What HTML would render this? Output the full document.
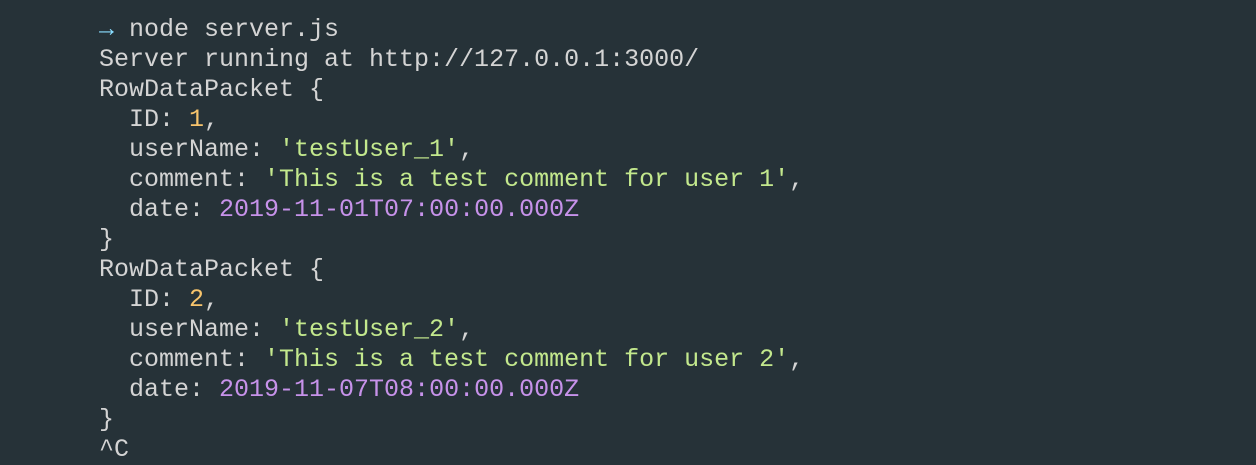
<!DOCTYPE html>
<html><head><meta charset="utf-8"><style>
html,body{margin:0;padding:0;width:1256px;height:440px;overflow:hidden;background:#263238;}
pre{margin:0;position:absolute;left:99px;top:15px;font-family:"Liberation Mono",monospace;font-size:25px;line-height:30px;color:#d4d4d4;}
.a{color:#89ddff;font-weight:bold}.n{color:#f7c46c}.s{color:#c3e88d}.d{color:#c792ea}
</style></head><body><pre><span class="a">→</span> node server.js
Server running at http://127.0.0.1:3000/
RowDataPacket {
  ID: <span class="n">1</span>,
  userName: <span class="s">'testUser_1'</span>,
  comment: <span class="s">'This is a test comment for user 1'</span>,
  date: <span class="d">2019-11-01T07:00:00.000Z</span>
}
RowDataPacket {
  ID: <span class="n">2</span>,
  userName: <span class="s">'testUser_2'</span>,
  comment: <span class="s">'This is a test comment for user 2'</span>,
  date: <span class="d">2019-11-07T08:00:00.000Z</span>
}
^C</pre></body></html>
